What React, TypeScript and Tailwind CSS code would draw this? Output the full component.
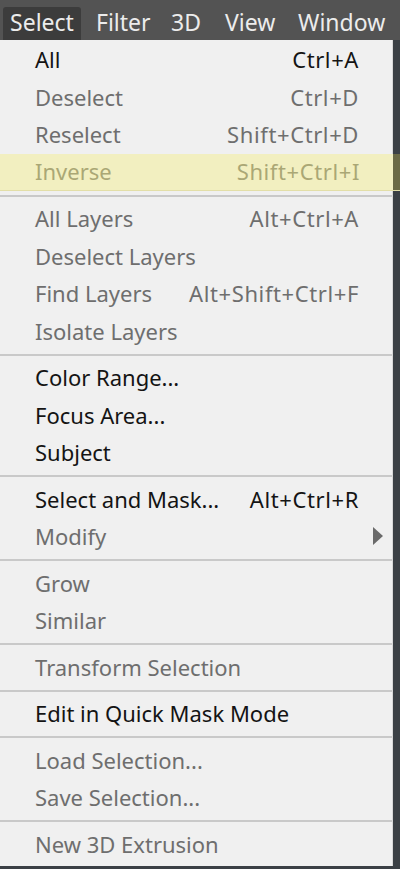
import React from "react";

type Item =
  | { kind: "sep" }
  | { kind: "item"; label: string; shortcut?: string; enabled?: boolean; hl?: boolean; sub?: boolean };

const items: Item[] = [
  { kind: "item", label: "All", shortcut: "Ctrl+A", enabled: true },
  { kind: "item", label: "Deselect", shortcut: "Ctrl+D" },
  { kind: "item", label: "Reselect", shortcut: "Shift+Ctrl+D" },
  { kind: "item", label: "Inverse", shortcut: "Shift+Ctrl+I", hl: true },
  { kind: "sep" },
  { kind: "item", label: "All Layers", shortcut: "Alt+Ctrl+A" },
  { kind: "item", label: "Deselect Layers" },
  { kind: "item", label: "Find Layers", shortcut: "Alt+Shift+Ctrl+F" },
  { kind: "item", label: "Isolate Layers" },
  { kind: "sep" },
  { kind: "item", label: "Color Range...", enabled: true },
  { kind: "item", label: "Focus Area...", enabled: true },
  { kind: "item", label: "Subject", enabled: true },
  { kind: "sep" },
  { kind: "item", label: "Select and Mask...", shortcut: "Alt+Ctrl+R", enabled: true },
  { kind: "item", label: "Modify", sub: true },
  { kind: "sep" },
  { kind: "item", label: "Grow" },
  { kind: "item", label: "Similar" },
  { kind: "sep" },
  { kind: "item", label: "Transform Selection" },
  { kind: "sep" },
  { kind: "item", label: "Edit in Quick Mask Mode", enabled: true },
  { kind: "sep" },
  { kind: "item", label: "Load Selection..." },
  { kind: "item", label: "Save Selection..." },
  { kind: "sep" },
  { kind: "item", label: "New 3D Extrusion" },
];

export default function App() {
  return (
    <div
      className="w-[400px] h-[869px] bg-[#3b4045] overflow-hidden flex flex-col"
      style={{ fontFamily: '"Noto Sans", "Open Sans", sans-serif' }}
    >
      {/* menu bar */}
      <div className="h-[40px] bg-[#535353] flex items-end text-[23px] text-[#ececec] shrink-0">
        <div className="ml-[3px] h-[33px] w-[78px] bg-[#3c3c3c] rounded-t-[3px] flex items-center justify-center pb-[3px]">
          Select
        </div>
        <div className="h-[33px] w-[90px] pl-[15px] flex items-center pb-[3px]">Filter</div>
        <div className="h-[33px] w-[54px] flex items-center pb-[3px]">3D</div>
        <div className="h-[33px] w-[73px] flex items-center pb-[3px]">View</div>
        <div className="h-[33px] flex items-center pb-[3px]">Window</div>
      </div>
      {/* menu panel */}
      <div className="w-[393px] bg-[#f0f0f0] pt-[1px] pb-[3px] text-[22px] border-r border-[#d8d8d8]">
        {items.map((it, i) =>
          it.kind === "sep" ? (
            <div key={i} className="h-[9px] flex items-center">
              <div className="h-[2px] w-full bg-[#c9c9c9]" />
            </div>
          ) : (
            <div
              key={i}
              className={
                "h-[37.5px] flex items-center pl-[35px] pr-[33px] relative " +
                (it.hl ? "bg-[#f2efc0] w-[400px] text-[#aaa775] border-b border-[#e3dfa8]" : it.enabled ? "text-[#141414]" : "text-[#6e6e6e]")
              }
            >
              <span className="flex-1 whitespace-nowrap">{it.label}</span>
              {it.shortcut && (
                <span className={"whitespace-nowrap tracking-[0.6px] " + (it.hl ? "mr-[7px]" : "")}>{it.shortcut}</span>
              )}
              {it.sub && (
                <svg className="absolute left-[373px] top-[9px]" width="10" height="18" viewBox="0 0 10 18">
                  <path d="M0 0 L10 9 L0 18 Z" fill="#6a6a6a" />
                </svg>
              )}
              {it.hl && <div className="absolute right-0 top-0 bottom-0 w-[7px] bg-[#6b6a45]" />}
            </div>
          )
        )}
      </div>
    </div>
  );
}
